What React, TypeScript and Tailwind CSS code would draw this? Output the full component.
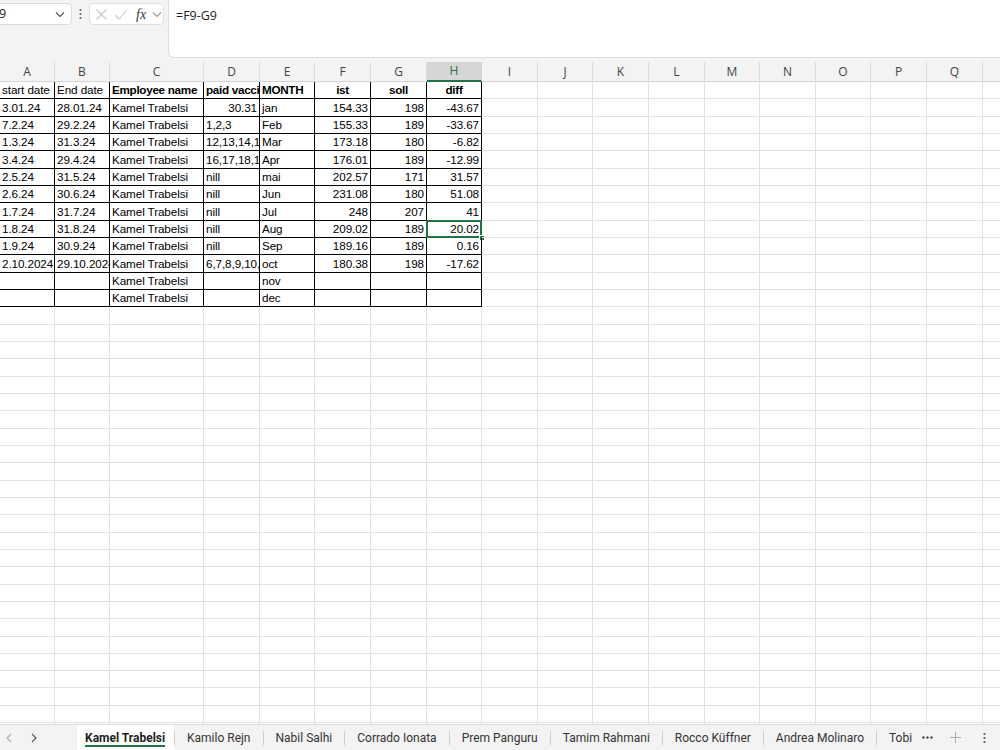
import React from "react";

const COLS: { l: string; w: number }[] = [
  { l: "A", w: 55 },
  { l: "B", w: 55 },
  { l: "C", w: 94 },
  { l: "D", w: 56 },
  { l: "E", w: 55 },
  { l: "F", w: 56 },
  { l: "G", w: 56 },
  { l: "H", w: 55 },
  { l: "I", w: 56 },
  { l: "J", w: 55 },
  { l: "K", w: 56 },
  { l: "L", w: 56 },
  { l: "M", w: 55 },
  { l: "N", w: 56 },
  { l: "O", w: 55 },
  { l: "P", w: 56 },
  { l: "Q", w: 56 },
  { l: "R", w: 56 },
];

type Cell = { t: string; a?: "l" | "r" | "c"; b?: boolean };

const K = "Kamel Trabelsi";
const raw: string[][] = [
  ["3.01.24", "28.01.24", K, "30.31", "jan", "154.33", "198", "-43.67"],
  ["7.2.24", "29.2.24", K, "1,2,3", "Feb", "155.33", "189", "-33.67"],
  ["1.3.24", "31.3.24", K, "12,13,14,15", "Mar", "173.18", "180", "-6.82"],
  ["3.4.24", "29.4.24", K, "16,17,18,19", "Apr", "176.01", "189", "-12.99"],
  ["2.5.24", "31.5.24", K, "nill", "mai", "202.57", "171", "31.57"],
  ["2.6.24", "30.6.24", K, "nill", "Jun", "231.08", "180", "51.08"],
  ["1.7.24", "31.7.24", K, "nill", "Jul", "248", "207", "41"],
  ["1.8.24", "31.8.24", K, "nill", "Aug", "209.02", "189", "20.02"],
  ["1.9.24", "30.9.24", K, "nill", "Sep", "189.16", "189", "0.16"],
  ["2.10.2024", "29.10.2024", K, "6,7,8,9,10,", "oct", "180.38", "198", "-17.62"],
  ["", "", K, "", "nov", "", "", ""],
  ["", "", K, "", "dec", "", "", ""],
];

const header: Cell[] = [
  { t: "start date" },
  { t: "End date" },
  { t: "Employee name", b: true },
  { t: "paid vacci", b: true },
  { t: "MONTH", b: true },
  { t: "ist", b: true, a: "c" },
  { t: "soll", b: true, a: "c" },
  { t: "diff", b: true, a: "c" },
];

const dataRows: Cell[][] = [
  header,
  ...raw.map((r, ri) =>
    r.map((t, ci) => {
      let a: "l" | "r" = "l";
      if (ci >= 5) a = "r";
      if (ci === 3 && ri === 0) a = "r";
      return { t, a };
    })
  ),
];

const TOTAL_ROWS = 38;

function XIcon() {
  return (
    <svg width="13" height="13" viewBox="0 0 13 13" fill="none" stroke="#c8c8c8" strokeWidth="1.1">
      <path d="M1.5 1.5 L11.5 11.5 M11.5 1.5 L1.5 11.5" />
    </svg>
  );
}
function CheckIcon() {
  return (
    <svg width="14" height="13" viewBox="0 0 14 13" fill="none" stroke="#c8c8c8" strokeWidth="1.1">
      <path d="M1 7 L5 11 L13 2" />
    </svg>
  );
}
function Chevron({ c = "#555" }: { c?: string }) {
  return (
    <svg width="10" height="7" viewBox="0 0 10 7" fill="none" stroke={c} strokeWidth="1.2">
      <path d="M1 1.5 L5 5.5 L9 1.5" />
    </svg>
  );
}
function Dots({ c = "#666" }: { c?: string }) {
  return (
    <svg width="3" height="12" viewBox="0 0 3 12" fill={c}>
      <circle cx="1.5" cy="2" r="1.1" />
      <circle cx="1.5" cy="6" r="1.1" />
      <circle cx="1.5" cy="10" r="1.1" />
    </svg>
  );
}

function GridCell({ c, w, ri, ci }: { c?: Cell; w: number; ri: number; ci: number }) {
  const inTable = ri < 13 && ci < 8;
  const selected = ri === 8 && ci === 7;
  const align = c?.a === "r" ? "justify-end" : c?.a === "c" ? "justify-center" : "justify-start";
  return (
    <div
      className={`relative box-border h-[17.33px] shrink-0 border-r border-b flex items-center ${align} ${
        inTable ? "border-r-black border-b-black" : "border-r-[#e1e1e1] border-b-[#e1e1e1]"
      } ${selected ? "" : "overflow-hidden"}`}
      style={{ width: w }}
    >
      {c && c.t && (
        <span
          className={`px-[2px] whitespace-nowrap text-[11.7px] leading-none text-black ${
            c.b ? "font-bold tracking-[-0.3px]" : "tracking-[-0.1px]"
          }`}
        >
          {c.t}
        </span>
      )}
      {selected && (
        <>
          <div className="pointer-events-none absolute -left-[1px] -top-[1px] right-[-1px] bottom-[-1px] border-2 border-[#217346]" />
          <div className="pointer-events-none absolute right-[-4px] bottom-[-4px] w-[6px] h-[6px] bg-[#217346] border border-white" />
        </>
      )}
    </div>
  );
}

export default function App() {
  const tabs = [
    "Kamilo Rejn",
    "Nabil Salhi",
    "Corrado Ionata",
    "Prem Panguru",
    "Tamim Rahmani",
    "Rocco Küffner",
    "Andrea Molinaro",
  ];
  return (
    <div
      className="w-[1000px] h-[750px] flex flex-col bg-white overflow-hidden"
      style={{ fontFamily: "'Liberation Sans', Arial, sans-serif" }}
    >
      {/* formula bar */}
      <div className="h-[62px] shrink-0 bg-[#f3f3f3] flex items-start" style={{ fontFamily: "'Open Sans', 'Noto Sans', sans-serif" }}>
        <div className="mt-[3px] h-[22px] w-[73px] -ml-[1px] bg-white border border-[#dcdcdc] rounded-r-[4px] flex items-center justify-between pr-[6px]">
          <span className="text-[12.5px] text-[#222] -ml-[1px]">9</span>
          <Chevron />
        </div>
        <div className="w-[17px] h-[28px] flex items-center justify-center">
          <Dots />
        </div>
        <div className="mt-[3px] h-[22px] w-[75px] bg-white border border-[#e0e0e0] rounded-[4px] flex items-center pl-[5px] gap-[6px]">
          <XIcon />
          <CheckIcon />
          <span className="text-[14px] italic text-[#333] ml-[2px]" style={{ fontFamily: "'Liberation Serif', serif" }}>
            fx
          </span>
          <Chevron c="#999" />
        </div>
        <div className="ml-[4px] flex-1 h-[58px] bg-white border-l border-b border-[#dedede] rounded-bl-[6px] pl-[7px] pt-[2px]">
          <span className="text-[12.5px] text-[#222]">=F9-G9</span>
        </div>
      </div>

      {/* column headers */}
      <div className="h-[20px] shrink-0 flex bg-[#f3f3f3]">
        {COLS.map((c, i) => (
          <div
            key={c.l}
            style={{ width: c.w, fontFamily: "'Open Sans', 'Noto Sans', sans-serif" }}
            className={`shrink-0 box-border flex items-center justify-center text-[12px] ${
              i === 7
                ? "bg-[#d6d6d6] text-[#217346] border-b-2 border-b-[#217346] border-r border-r-[#d0d0d0]"
                : "text-[#444] border-b border-b-[#d4d4d4] border-r border-r-[#dddddd]"
            }`}
          >
            {c.l}
          </div>
        ))}
      </div>

      {/* grid */}
      <div className="flex-1 overflow-hidden">
        {Array.from({ length: TOTAL_ROWS }).map((_, ri) => (
          <div key={ri} className="flex">
            {COLS.map((c, ci) => (
              <GridCell key={c.l} c={dataRows[ri]?.[ci]} w={c.w} ri={ri} ci={ci} />
            ))}
          </div>
        ))}
      </div>

      {/* sheet tabs */}
      <div
        className="h-[26px] shrink-0 bg-[#f3f3f3] border-t border-[#dadada] flex items-stretch text-[12px] text-[#333]"
        style={{ fontFamily: "Roboto, 'Noto Sans', sans-serif" }}
      >
        <div className="w-[77px] shrink-0 flex items-center gap-[17px] pl-[5px]">
          <svg width="8" height="10" viewBox="0 0 8 10" fill="none" stroke="#aaa" strokeWidth="1.1">
            <path d="M6 1 L2 5 L6 9" />
          </svg>
          <svg width="8" height="10" viewBox="0 0 8 10" fill="none" stroke="#555" strokeWidth="1.1">
            <path d="M2 1 L6 5 L2 9" />
          </svg>
        </div>
        <div className="w-[97px] shrink-0 bg-white pl-[8px] flex items-center relative">
          <span className="font-bold text-[#222]">Kamel Trabelsi</span>
          <div className="absolute left-[8px] w-[80px] bottom-[3px] h-[2px] bg-[#217346]" />
        </div>
        {tabs.map((t) => (
          <div key={t} className="shrink-0 flex items-center">
            <div className="w-px h-[14px] bg-[#cfcfcf]" />
            <span className="px-[12px]">{t}</span>
          </div>
        ))}
        <div className="shrink-0 flex items-center">
          <div className="w-px h-[14px] bg-[#cfcfcf]" />
          <span className="pl-[12px]">Tobi</span>
          <svg className="ml-[10px]" width="11" height="3" viewBox="0 0 11 3" fill="#444">
            <circle cx="1.5" cy="1.5" r="1.2" />
            <circle cx="5.5" cy="1.5" r="1.2" />
            <circle cx="9.5" cy="1.5" r="1.2" />
          </svg>
          <svg className="ml-[17px]" width="11" height="11" viewBox="0 0 11 11" fill="none" stroke="#aaa" strokeWidth="1">
            <path d="M5.5 0 V11 M0 5.5 H11" />
          </svg>
          <span className="ml-[22px]">
            <Dots c="#555" />
          </span>
        </div>
      </div>
    </div>
  );
}
